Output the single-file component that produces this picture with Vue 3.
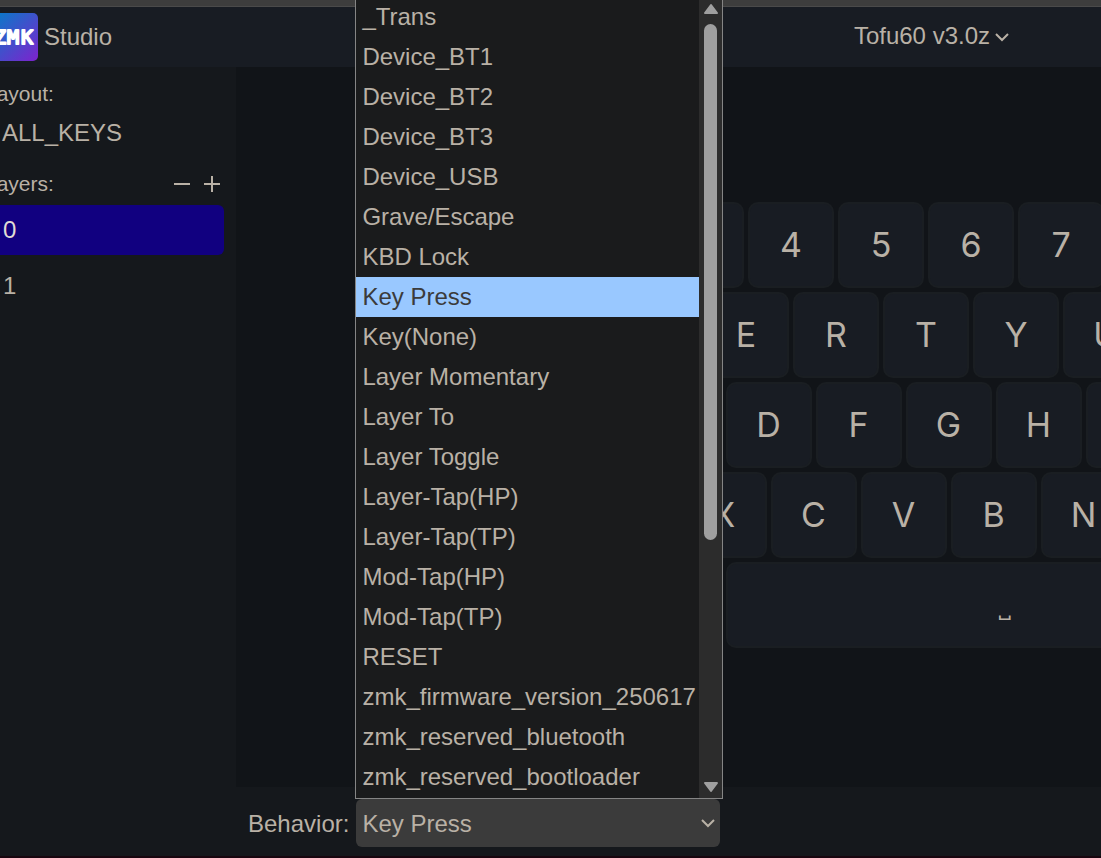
<script setup>
import { ref } from 'vue'

const behaviors = [
  '_Trans', 'Device_BT1', 'Device_BT2', 'Device_BT3', 'Device_USB',
  'Grave/Escape', 'KBD Lock', 'Key Press', 'Key(None)', 'Layer Momentary',
  'Layer To', 'Layer Toggle', 'Layer-Tap(HP)', 'Layer-Tap(TP)', 'Mod-Tap(HP)',
  'Mod-Tap(TP)', 'RESET', 'zmk_firmware_version_250617',
  'zmk_reserved_bluetooth', 'zmk_reserved_bootloader',
]
const behavior = ref('Key Press')

const layers = ['0', '1']
const layer = ref('0')

// Key widths are counted in quarter units; a plain key is four of them.
// Spaces in a row string stand for keys without a legend.
const row = (first, legends, last) => [
  { label: '', span: first },
  ...legends.split('').map((c) => ({ label: c.trim(), span: 4 })),
  { label: '', span: last },
]
const blank = (n) => Array.from({ length: n }, () => ({ label: '', span: 5 }))
const keys = [
  ...row(4, '   4567     ', 8),
  ...row(6, '  ERTYU     ', 6),
  ...row(7, '  DFGH     ', 9),
  ...row(9, ' XCVBN    ', 11),
  ...blank(3), { label: '␣', span: 25, small: true }, ...blank(4),
]
</script>

<template>
  <div class="app">
    <div class="titlebar"></div>
    <header class="header">
      <div class="brand">
        <svg class="logo" viewBox="0 0 48 48" role="img" aria-label="ZMK">
          <defs>
            <linearGradient id="brandFill" x1="0" y1="0" x2="1" y2="1">
              <stop offset="0" stop-color="#0080c8" />
              <stop offset="1" stop-color="#7e22ce" />
            </linearGradient>
          </defs>
          <rect width="48" height="48" rx="5" fill="url(#brandFill)" />
          <text x="4 17 31" y="31" class="logo-text">ZMK</text>
        </svg>
        <span>Studio</span>
      </div>
      <button class="device" type="button">
        Tofu60 v3.0z
        <svg class="chevron" viewBox="0 0 16 16"><path d="M2 6l6 6 6-6" /></svg>
      </button>
    </header>

    <div class="body">
      <aside class="sidebar">
        <h2 class="caption">Layout:</h2>
        <div class="layout-name">ALL_KEYS</div>
        <div class="layers-head">
          <h2 class="caption">Layers:</h2>
          <button class="icon-btn" type="button" aria-label="Remove layer">
            <svg viewBox="0 0 16 16"><path d="M0 8h16" /></svg>
          </button>
          <button class="icon-btn" type="button" aria-label="Add layer">
            <svg viewBox="0 0 16 16"><path d="M0 8h16M8 0v16" /></svg>
          </button>
        </div>
        <div class="layers">
          <button
            v-for="l in layers" :key="l" type="button" class="layer"
            :class="{ active: l === layer }" @click="layer = l"
          >{{ l }}</button>
        </div>
      </aside>

      <main class="main">
        <div class="stage">
          <div class="keyboard">
            <div v-for="(key, i) in keys" :key="i" class="slot" :style="{ gridColumn: `span ${key.span}` }">
              <button type="button" class="key"><span :class="{ small: key.small }">{{ key.label }}</span></button>
            </div>
          </div>
        </div>
        <div class="binding">
          <label class="binding-label" for="behavior">Behavior:</label>
          <div class="picker">
            <select id="behavior" v-model="behavior" class="select">
              <option v-for="b in behaviors" :key="b">{{ b }}</option>
            </select>
            <svg class="chevron select-chevron" viewBox="0 0 16 16"><path d="M2 5l6 6 6-6" /></svg>
            <div class="popup">
              <ul class="options" role="listbox" aria-label="Behavior">
                <li
                  v-for="b in behaviors" :key="b" role="option" class="option"
                  :class="{ picked: b === behavior }" :aria-selected="b === behavior"
                  @click="behavior = b"
                >{{ b }}</li>
              </ul>
              <div class="scrollbar">
                <svg class="arrow" viewBox="0 0 16 12"><path d="M8 2L14 10H2z" /></svg>
                <div class="track"><div class="thumb"></div></div>
                <svg class="arrow" viewBox="0 0 16 12"><path d="M8 10L14 2H2z" /></svg>
              </div>
            </div>
          </div>
        </div>
      </main>
    </div>
  </div>
</template>

<style>
html, body { height: 100%; margin: 0; overflow: hidden; background: #15181c; }
#app { height: 100%; }
</style>

<style scoped>
* { box-sizing: border-box; }
.app {
  height: 100vh;
  display: flex;
  flex-direction: column;
  border-bottom: 2px solid #18060f;
  overflow: hidden;
  background: #15181c;
  color: #b9b1a6;
  font: 24px/36px "Liberation Sans", Arial, sans-serif;
}
button, select { font: inherit; color: inherit; border: 0; background: none; padding: 0; margin: 0; }
.titlebar { flex: none; height: 7px; background: #3d3d3d; border-bottom: 1px solid #4a4a4a; }
.header {
  flex: none;
  height: 60px;
  display: flex;
  align-items: center;
  justify-content: space-between;
  padding-right: 91px;
  background: #181c23;
}
.brand { display: flex; align-items: center; gap: 6px; margin-left: -10px; }
.logo { width: 48px; height: 48px; }
.logo-text {
  font: 20px "DejaVu Sans Mono", monospace;
  fill: #fff;
  stroke: #fff;
  stroke-width: 2;
  stroke-linejoin: round;
}
.device { display: flex; align-items: center; gap: 4px; padding-bottom: 2px; }
.chevron { width: 16px; height: 16px; fill: none; stroke: #b9b1a6; stroke-width: 2; }
.body { flex: 1; display: flex; min-height: 0; }
.sidebar {
  flex: none;
  width: 251px;
  margin-left: -15px;
  padding: 12px 12px 0 0;
}
.caption { margin: 0; font-size: 21px; line-height: 30px; font-weight: 400; }
.layout-name { padding: 6px 17px 18px; }
.layers-head { display: flex; align-items: center; gap: 14px; padding-right: 4px; }
.layers-head .caption { flex: 1; }
.icon-btn { width: 16px; height: 16px; display: flex; }
.icon-btn svg { width: 16px; height: 16px; stroke: #b9b1a6; stroke-width: 2; }
.layers { display: flex; flex-direction: column; gap: 6px; padding-top: 6px; }
.layer { height: 50px; padding: 0 18px; text-align: left; border-radius: 6px; }
.active { background: #110080; color: #e0dcd5; }
.main { flex: 1; min-width: 0; display: flex; flex-direction: column; }
.stage {
  flex: 1;
  min-height: 0;
  display: flex;
  align-items: center;
  padding: 0 0 4px 150px;
  overflow: hidden;
  background: #111418;
}
.keyboard {
  flex: none;
  width: 1350px;
  display: grid;
  grid-template-columns: repeat(60, 1fr);
  grid-auto-rows: 90px;
}
.slot { padding: 2px; }
.key {
  width: 100%;
  height: 100%;
  border: 2px solid #1a1e22;
  border-radius: 10px;
  background: #181c23;
  font: 34px/1 Inter, sans-serif;
}
.small { font-size: 20px; }
.binding {
  flex: none;
  height: 69px;
  display: flex;
  align-items: center;
  gap: 7px;
  padding: 3px 12px 0;
}
.binding-label { padding-top: 2px; }
.picker { position: relative; width: 364px; }
.select {
  display: block;
  width: 100%;
  height: 48px;
  padding: 2px 6px 0;
  appearance: none;
  border-radius: 6px;
  background: #3b3b3b;
}
.select-chevron { position: absolute; right: 4px; top: 16px; pointer-events: none; }
.popup {
  position: absolute;
  left: -1px;
  bottom: 100%;
  width: 368px;
  display: flex;
  border: 1px solid #858585;
  background: #1a1b1c;
}
.options { flex: 1; min-width: 0; margin: 0; padding: 0 0 1px; list-style: none; }
.option { height: 40px; padding: 0 6px; line-height: 40px; white-space: nowrap; }
.picked { background: #99c8ff; color: #3b3b3b; }
.scrollbar {
  flex: none;
  width: 23px;
  display: flex;
  flex-direction: column;
  align-items: center;
  padding: 6px 0 5px;
  background: #2c2c2c;
}
.arrow { flex: none; width: 16px; height: 12px; fill: #9f9f9f; stroke: #9f9f9f; stroke-width: 2; stroke-linejoin: round; }
.track { flex: 1; width: 13px; padding-top: 9px; }
.thumb { height: 516px; border-radius: 7px; background: #9f9f9f; }
</style>
